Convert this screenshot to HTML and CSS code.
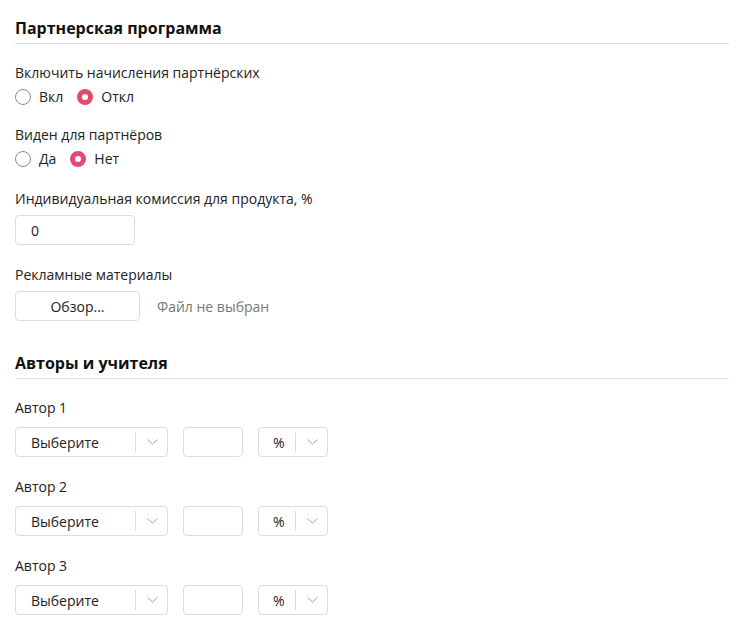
FILE: index.html
```html
<!DOCTYPE html>
<html lang="ru">
<head>
<meta charset="utf-8">
<link rel="stylesheet" href="styles.css">
</head>
<body>
<div class="page">
  <h2 class="section-title">Партнерская программа</h2>

  <div class="group first">
    <div class="label">Включить начисления партнёрских</div>
    <div class="radios">
      <label class="radio"><input type="radio" name="r1"><span>Вкл</span></label>
      <label class="radio"><input type="radio" name="r1" checked><span>Откл</span></label>
    </div>
  </div>

  <div class="group g2">
    <div class="label">Виден для партнёров</div>
    <div class="radios">
      <label class="radio"><input type="radio" name="r2"><span>Да</span></label>
      <label class="radio"><input type="radio" name="r2" checked><span>Нет</span></label>
    </div>
  </div>

  <div class="group">
    <div class="label">Индивидуальная комиссия для продукта, %</div>
    <div class="control"><input class="text-input" type="text" value="0"></div>
  </div>

  <div class="group">
    <div class="label">Рекламные материалы</div>
    <div class="control file-row">
      <button class="browse" type="button">Обзор...</button>
      <span class="file-name">Файл не выбран</span>
    </div>
  </div>

  <h2 class="section-title second">Авторы и учителя</h2>

  <div class="group first">
    <div class="label">Автор 1</div>
    <div class="control author-row">
      <div class="select wide"><span class="value">Выберите</span><span class="arrow"><svg width="11" height="6" viewBox="0 0 11 6"><path d="M0.5 0.5 L5.5 5 L10.5 0.5" fill="none" stroke="#a0a0a0" stroke-width="1"/></svg></span></div>
      <div class="small-input"></div>
      <div class="select narrow"><span class="value">%</span><span class="arrow"><svg width="11" height="6" viewBox="0 0 11 6"><path d="M0.5 0.5 L5.5 5 L10.5 0.5" fill="none" stroke="#a0a0a0" stroke-width="1"/></svg></span></div>
    </div>
  </div>

  <div class="group">
    <div class="label">Автор 2</div>
    <div class="control author-row">
      <div class="select wide"><span class="value">Выберите</span><span class="arrow"><svg width="11" height="6" viewBox="0 0 11 6"><path d="M0.5 0.5 L5.5 5 L10.5 0.5" fill="none" stroke="#a0a0a0" stroke-width="1"/></svg></span></div>
      <div class="small-input"></div>
      <div class="select narrow"><span class="value">%</span><span class="arrow"><svg width="11" height="6" viewBox="0 0 11 6"><path d="M0.5 0.5 L5.5 5 L10.5 0.5" fill="none" stroke="#a0a0a0" stroke-width="1"/></svg></span></div>
    </div>
  </div>

  <div class="group">
    <div class="label">Автор 3</div>
    <div class="control author-row">
      <div class="select wide"><span class="value">Выберите</span><span class="arrow"><svg width="11" height="6" viewBox="0 0 11 6"><path d="M0.5 0.5 L5.5 5 L10.5 0.5" fill="none" stroke="#a0a0a0" stroke-width="1"/></svg></span></div>
      <div class="small-input"></div>
      <div class="select narrow"><span class="value">%</span><span class="arrow"><svg width="11" height="6" viewBox="0 0 11 6"><path d="M0.5 0.5 L5.5 5 L10.5 0.5" fill="none" stroke="#a0a0a0" stroke-width="1"/></svg></span></div>
    </div>
  </div>
</div>
</body>
</html>
```

FILE: styles.css
```css
* { box-sizing: border-box; }
html, body { margin: 0; padding: 0; background: #fff; }
body {
  font-family: "Open Sans", "Noto Sans", sans-serif;
  font-size: 14px;
  color: #222;
}
.page {
  padding: 16px 0 0 15px;
}
.section-title {
  margin: 0;
  font-size: 16px;
  font-weight: 700;
  line-height: 24px;
  color: #111;
  padding-bottom: 3px;
  border-bottom: 1px solid #dedbe3;
}
.section-title.second { margin-top: 30px; }

.group { margin-top: 20px; }
.group.first { margin-top: 19px; }
.group.g2 { margin-top: 18px; }
.label { line-height: 20px; }

.radios {
  display: flex;
  gap: 14px;
  margin-top: 4px;
  height: 20px;
  align-items: center;
}
.radio {
  display: flex;
  align-items: center;
  gap: 8px;
  line-height: 20px;
}
.radio input {
  appearance: none;
  -webkit-appearance: none;
  margin: 0;
  width: 16px;
  height: 16px;
  border-radius: 50%;
  border: 1px solid #8a8a8a;
  background: #fff;
}
.radio input:checked {
  border: 5px solid #e34a6f;
  background: #fff;
}

.control { margin-top: 6px; }
.text-input {
  display: block;
  width: 120px;
  height: 30px;
  border: 1px solid #dcdcdc;
  border-radius: 4px;
  padding: 0 0 0 15px;
  font: inherit;
  color: #222;
  outline: none;
}
.file-row {
  display: flex;
  align-items: center;
  gap: 17px;
}
.browse {
  width: 125px;
  height: 30px;
  border: 1px solid #dcdcdc;
  border-radius: 4px;
  background: #fff;
  font: inherit;
  color: #222;
  padding: 0;
}
.file-name { color: #777; }

.author-row {
  display: flex;
  gap: 15px;
  margin-top: 9px;
}
.select, .small-input {
  height: 30px;
  border: 1px solid #dcdcdc;
  border-radius: 4px;
  background: #fff;
}
.select {
  display: flex;
  align-items: center;
}
.select.wide { width: 153px; }
.select.wide .value { width: 119px; padding-left: 15px; }
.select.narrow { width: 70px; }
.select.narrow .value { width: 36px; padding-left: 14px; }
.select .arrow {
  flex: 1;
  display: flex;
  align-items: center;
  justify-content: center;
  height: 20px;
  border-left: 1px solid #dcdcdc;
  padding-left: 1px;
}
.small-input { width: 60px; }
```
